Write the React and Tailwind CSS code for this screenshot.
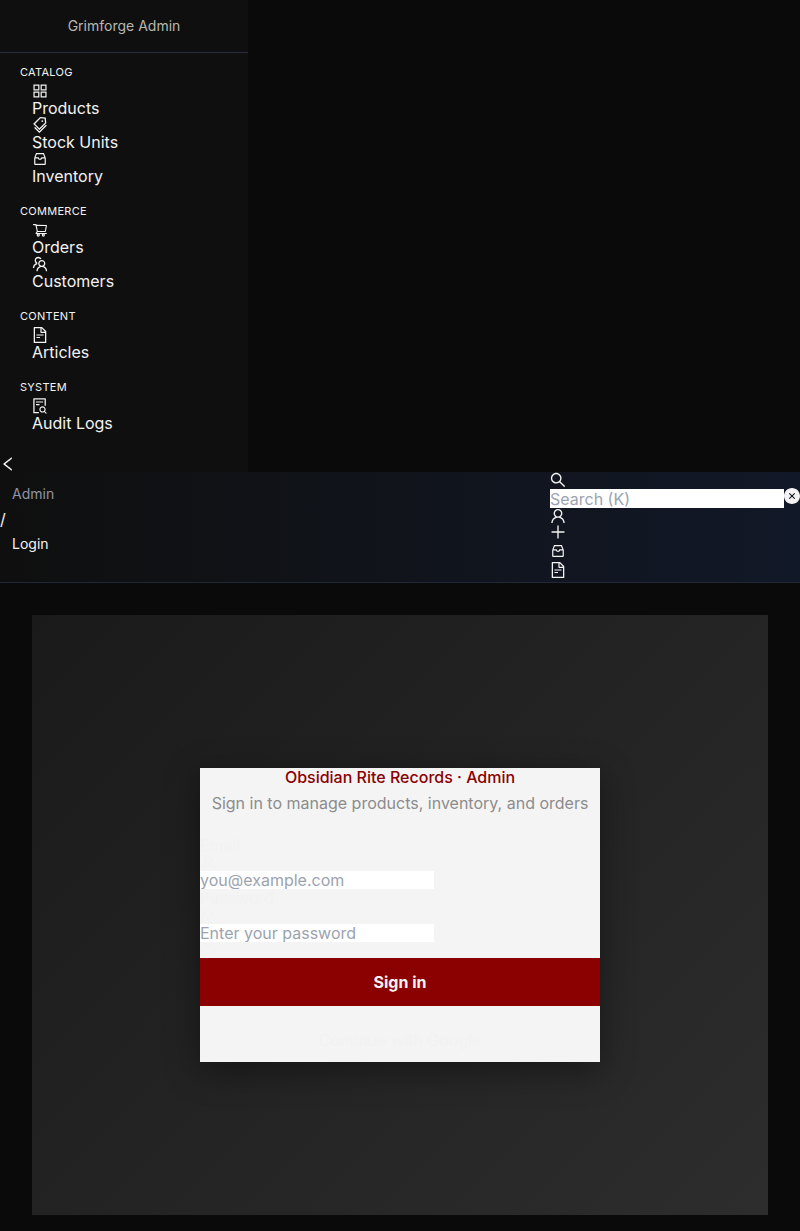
import {
  AiOutlineAppstore,
  AiOutlineTags,
  AiOutlineInbox,
  AiOutlineShoppingCart,
  AiOutlineTeam,
  AiOutlineFileText,
  AiOutlineFileSearch,
  AiOutlineLeft,
  AiOutlineSearch,
  AiOutlineUser,
  AiOutlinePlus,
  AiOutlineLock,
  AiOutlineEye,
  AiFillCloseCircle,
} from "react-icons/ai";

const sections = [
  {
    label: "CATALOG",
    items: [
      { name: "Products", icon: AiOutlineAppstore },
      { name: "Stock Units", icon: AiOutlineTags },
      { name: "Inventory", icon: AiOutlineInbox, padded: true },
    ],
  },
  {
    label: "COMMERCE",
    items: [
      { name: "Orders", icon: AiOutlineShoppingCart, padded: true },
      { name: "Customers", icon: AiOutlineTeam },
    ],
  },
  { label: "CONTENT", items: [{ name: "Articles", icon: AiOutlineFileText }] },
  { label: "SYSTEM", items: [{ name: "Audit Logs", icon: AiOutlineFileSearch }] },
];

// Trims the empty margin round a glyph so that it fills its 16px box;
// a padded glyph keeps its full 1024-unit canvas.
function Icon({ as: Glyph, padded = false }) {
  return (
    <Glyph
      viewBox={padded ? "0 0 1024 1024" : "64 64 896 896"}
      className="block size-4"
      aria-hidden="true"
    />
  );
}

function Sidebar() {
  return (
    <aside className="w-[248px] bg-[#0f0f0f]">
      <div className="border-b border-[#2a2f3e] py-4 text-center text-sm text-[#b8b8b0]">
        Grimforge Admin
      </div>
      <nav className="flex flex-col gap-5 px-5 pt-[13px] pb-6">
        {sections.map((section) => (
          <section key={section.label}>
            <h2 className="mb-1 text-[11px] leading-[13px] tracking-wide">{section.label}</h2>
            <ul className="pl-3">
              {section.items.map((item) => (
                <li key={item.name}>
                  <a href="#" className="block leading-[18px]">
                    <Icon as={item.icon} padded={item.padded} />
                    {item.name}
                  </a>
                </li>
              ))}
            </ul>
          </section>
        ))}
      </nav>
      <button type="button" aria-label="Collapse sidebar" className="block">
        <Icon as={AiOutlineLeft} />
      </button>
    </aside>
  );
}

function TopBar() {
  return (
    <header className="flex justify-between border-b border-[#1f2937] bg-linear-to-r from-[#0f0f0f] to-[#111827]">
      <nav aria-label="Breadcrumb" className="flex flex-col gap-[5px] pt-3 leading-5">
        <a href="#" className="px-3 text-sm text-[#8f96a6]">Admin</a>
        <span>/</span>
        <a href="#" className="px-3 text-sm">Login</a>
      </nav>
      <div className="pb-1">
        <Icon as={AiOutlineSearch} />
        <div className="flex h-5 items-end">
          <input
            type="text"
            aria-label="Search"
            placeholder="Search (K)"
            className="h-[19px] w-[234px] bg-white leading-[18px] text-black placeholder:text-[#9ca3af]"
          />
          <button type="button" aria-label="Clear search" className="self-start">
            <Icon as={AiFillCloseCircle} />
          </button>
        </div>
        <button type="button" aria-label="Account" className="block">
          <Icon as={AiOutlineUser} />
        </button>
        <button type="button" aria-label="Create" className="block">
          <Icon as={AiOutlinePlus} />
        </button>
        <a href="#" aria-label="Inventory" className="block w-4 pt-[3px]">
          <Icon as={AiOutlineInbox} padded />
        </a>
        <a href="#" aria-label="Articles" className="block w-4 pt-[3px]">
          <Icon as={AiOutlineFileText} />
        </a>
      </div>
    </header>
  );
}

function LoginCard() {
  return (
    <form className="w-full max-w-[400px] bg-[#f4f4f4] text-[#f2f2f2] shadow-[0_8px_32px_rgba(0,0,0,0.4)]">
      <h1 className="text-center leading-[18px] font-medium text-[#8b0000]">
        Obsidian Rite Records · Admin
      </h1>
      <p className="mt-2 mb-6 text-center leading-[18px] text-[#8c8c8c]">
        Sign in to manage products, inventory, and orders
      </p>
      <label htmlFor="email" className="block pb-px leading-[18px]">Email</label>
      <Icon as={AiOutlineUser} />
      <input
        id="email"
        type="email"
        placeholder="you@example.com"
        className="block h-[18px] w-[234px] bg-white leading-[18px] text-black placeholder:text-[#9ca3af]"
      />
      <label htmlFor="password" className="block pb-px leading-[18px]">Password</label>
      <Icon as={AiOutlineLock} />
      <input
        id="password"
        type="password"
        placeholder="Enter your password"
        className="block h-[18px] w-[234px] bg-white leading-[18px] text-black placeholder:text-[#9ca3af]"
      />
      <button type="button" aria-label="Show password" className="block">
        <Icon as={AiOutlineEye} />
      </button>
      <button type="submit" className="block h-12 w-full bg-[#8b0000] font-bold text-[#f3f3f3]">
        Sign in
      </button>
      <button type="button" className="mt-4 block h-10 w-full pb-1">
        Continue with Google
      </button>
    </form>
  );
}

export default function App() {
  return (
    <div className="min-h-screen bg-[#0a0a0a] font-[Inter,sans-serif] text-base text-[#f3f3f3]">
      <Sidebar />
      <TopBar />
      <main className="px-8 pt-8 pb-4">
        <div className="flex min-h-[600px] items-center justify-center bg-linear-135 from-[#1a1a1a] to-[#2d2d2d]">
          <LoginCard />
        </div>
      </main>
    </div>
  );
}
